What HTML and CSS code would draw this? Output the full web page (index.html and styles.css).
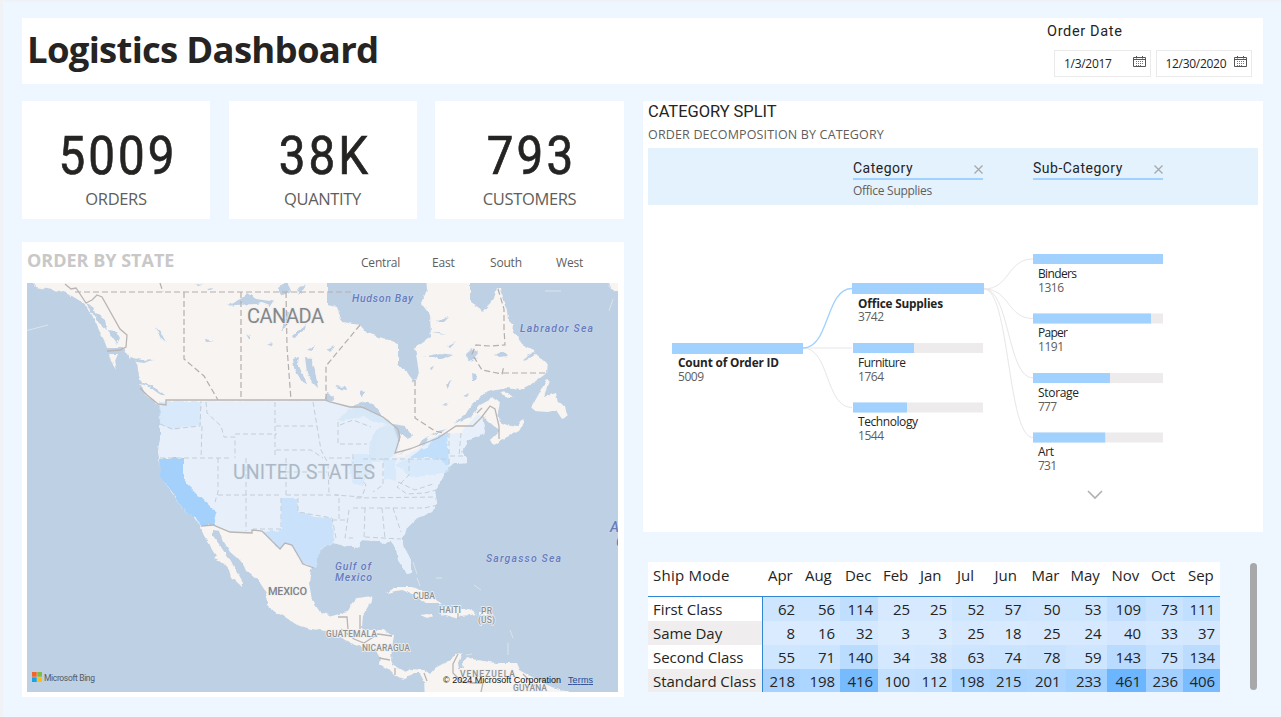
FILE: index.html
```
<!DOCTYPE html>
<html lang="en">
<head>
<meta charset="utf-8">
<title>Logistics Dashboard</title>
<link rel="stylesheet" href="styles.css">
</head>
<body>
<div class="page">
  <header class="header">
    <h1 class="title">Logistics Dashboard</h1>
    <div class="dates">
      <div class="dates-label">Order Date</div>
      <div class="dates-row">
        <div class="date"><span>1/3/2017</span>
          <svg class="cal" width="13" height="12" viewBox="0 0 13 12"><path d="M.5 1.5h12v9H.5zM.5 3.5h12M3.500 0v2.500M9.500 0v2.500"/><path class="dots" d="M3 5.500h8M3 7.500h8M3 9.500h6"/></svg></div>
        <div class="date"><span>12/30/2020</span>
          <svg class="cal" width="13" height="12" viewBox="0 0 13 12"><path d="M.5 1.5h12v9H.5zM.5 3.5h12M3.500 0v2.500M9.500 0v2.500"/><path class="dots" d="M3 5.500h8M3 7.500h8M3 9.500h6"/></svg></div>
      </div>
    </div>
  </header>
  <main class="main">
    <section class="left">
      <div class="kpis">
        <div class="kpi"><div class="kpi-value">5009</div><div class="kpi-label">ORDERS</div></div>
        <div class="kpi"><div class="kpi-value">38K</div><div class="kpi-label">QUANTITY</div></div>
        <div class="kpi"><div class="kpi-value">793</div><div class="kpi-label">CUSTOMERS</div></div>
      </div>
      <div class="map-card">
        <div class="map-head">
          <h2 class="map-title">ORDER BY STATE</h2>
          <nav class="regions"><span>Central</span><span>East</span><span>South</span><span>West</span></nav>
        </div>
        <svg class="map" width="591" height="409" viewBox="27 283 591 409">
          <filter id="coast" filterUnits="userSpaceOnUse" x="20" y="276" width="605" height="423"><feTurbulence type="fractalNoise" baseFrequency=".16" numOctaves="2" seed="4"/><feDisplacementMap in="SourceGraphic" scale="4" xChannelSelector="R" yChannelSelector="G"/></filter>
          <rect class="sea" x="27" y="283" width="591" height="409"/>
          <g filter="url(#coast)">
          <!-- Continent -->
          <path class="land" d="M31 276L36 287 46 289 60 291 72 296 80 301 86 306 92 315 98 328 104 340 107 348 124 348 129 358 137 363 139 376 142 383 150 385 158 390 165 395 165 402 159 403 161 412 160 424 160 440 158 452 160 460 162 470 163 480 168 487 173 494 180 504 185 512 192 515 197 520 200 525 206 540 211 548 216 556 213 559 223 563 229 570 231 577 238 583 242 587 243 583 236 571 231 561 225 553 219 544 213 536 213 530 220 531 224 542 230 552 237 558 244 566 246 571 250 573 258 580 266 592 267 605 275 612 285 617 297 625 311 629 320 630 332 632 345 641 355 645 366 648 376 651 380 658 379 664 388 669 396 677 405 679 414 673 420 673 424 680 425 699 575 699 567 692 547 685 533 677 520 670 517 663 497 663 477 660 467 657 462 664 463 668 459 668 458 662 462 653 458 652 450 660 435 668 430 674 423 670 410 669 405 672 393 665 391 660 392 648 394 635 383 630 363 630 362 627 363 615 370 603 372 596 357 598 352 603 347 612 333 616 320 612 312 600 309 583 311 570 317 553 320 550 333 543 343 545 358 548 360 541 380 542 385 544 390 540 396 548 398 560 407 574 411 573 411 560 403 545 403 537 407 528 417 518 432 512 437 503 435 492 443 477 447 469 454 464 467 463 467 458 462 452 467 440 485 433 483 424 482 415 487 420 495 427 500 430 490 440 493 445 507 437 519 431 525 421 523 419 517 427 507 425 500 422 498 412 500 403 493 398 480 405 470 417 453 424 464 416 473 403 487 392 507 388 520 390 533 383 547 373 548 363 537 355 534 350 522 344 519 337 513 333 514 325 508 319 507 311 503 300 500 289 497 288 493 300 482 312 478 307 470 303 470 276 426 276 427 290 421 303 430 315 431 337 415 348 419 373 413 382 407 373 398 363 398 343 367 333 360 325 342 322 337 307 327 305 327 276z"/>
          <path class="land" d="M139 384L148 386 158 393 165 397 165 405 156 404 147 395zM109 354L118 354 115 361 117 371 111 361zM547 379L550 382 544 397 556 393 558 402 565 406 567 415 562 419 556 410 548 412 534 411 531 408 541 390zM500 392L508 393 514 398 508 398zM386 593L396 587 412 587 426 593 442 604 427 604 417 596 402 590zM442 608L455 607 468 609 477 614 462 616 459 619 441 614zM420 615l8-1 5 2-6 2zM479 612h9v3h-9zM608 276h12v16l-9-3-2-5z"/>
          <!-- Lakes and fjords -->
          <path class="lake" d="M86 303q7 2 9 10l10 7 2 10-8-7-8-12zM108 330l8 1 4 7-3 6-6-8zM227 306l15-8 5-5 9 6 14 2-13 3-22 1zM262 303l12-3-4 6zM278 288l9-7 4 10-10 5zM298 288l9-5-8 12zM285 310l5 3-3 13-6 6 4-12zM292 336l14-12-2 7-11 7zM156 326l5 7 5 9-6-5zM205 339l9 2-8 1zM246 334l4 3v4zM267 345l6-3-2 5zM293 359l6-2-1 7 9 20-5-2-8-14zM305 357l6 1 4 13 3 17-6-6-5-9zM307 350l9-5-3 6zM327 350l7-4-4 6zM335 386l10 1 1 3-6-1zM361 389l4 3-2 5-4-2zM326 393l8 3-2 6-6-2zM435 322l14-5-6 6zM432 331l14 4-8-1zM447 346l9-5-6 6zM424 357l16-4 13 2-11 5-8-3zM430 368l5-2-3 5zM446 385l6-6-4 9zM442 405l5-2 1 3zM465 353l6-5 7 4-4 5 4 2-9 3zM471 373l5 1 1 6-5 1zM463 396l6-3-2 4zM494 355l8-3 6 4-8 1zM523 360l10-8 4 1-8 6zM130 357l12 3 12-1-10 4-13-2zM195 284l8 1-5 1zM207 289l6-1-3 3z"/>
          <path class="lake" d="M350 407L363 402 373 404 383 417 390 422 378 421 364 412 347 411 337 421zM369 442l10-15 5 1-7 9-2 20-6-1zM393 424l12 2 7 10-5 2-7-5 0 8-4 5zM395 457l15-9 16-4 3-8 13-4 4-3-10 3-14 8-3 5-17 7z"/>
          <!-- Shaded states -->
          <path class="us" d="M161 402L325 400 330 402 350 407 362 407 383 417 393 425 397 439 400 446 395 458 404 456 420 448 429 439 443 433 460 433 468 425 477 413 482 416 485 433 467 440 462 452 467 458 467 463 454 464 447 469 443 477 435 492 437 503 432 512 417 518 407 528 403 537 403 545 411 560 411 573 407 574 398 560 396 548 390 540 385 544 380 542 360 541 358 548 343 545 333 543 320 550 317 553 313 568 302 564 291 545 284 543 279 549 270 540 262 531 252 531 252 533 230 532 215 526 200 525 192 515 185 512 180 504 173 494 168 487 163 480 158 452 160 440 160 424z"/>
          <path class="s1" d="M159 401h42v24l-22 3-8 2-11-6zM354 454h16l2 16-9 16-9-2-5-16zM384 460l12-1v22l-12-3zM396 464l11-5h43l-1 13-38 6z"/>
          <path class="mich" d="M337 421l12-11 14-5 19 12 11 9-14-3-15-6zM369 456l1-15 9-14 14-3 5 14-4 17-8 6-14 1zM377 454l-2-9 7-15 7 4 3 12-4 12z"/>
          <path class="s2" d="M281 498h17v14l17 5 16 1 3 12-1 13-13 7-5 18-12-4-11-19-7-2-5 6-9-9-7-8 18-2z"/>
          <path class="ca" d="M160 458h24v23l33 32-3 12-14 0-3-7-12-6-12-19-12-15z"/>
          <path class="ny" d="M409 458l10-7 8-3 6-9 14-7 2 33-14-7z"/>
          </g>
          <path class="isles" d="M545 291h16M609 311l4-12M413 562l4 12M436 578h6M474 585l7 5M417 578l3 8M510 630l3 8M508 643v12M466 655l6-1M25 331l23-6"/>
          <!-- State and province boundaries -->
          <path class="st" d="M160 424l12 5 28-3 1-24M160 458h69M202 426l-1 32M206 402l1 11 14 13 3 11h11v21M218 458v34l-3 10M235 434h42M246 458v73M275 402v55M281 498v31M281 529h-28M218 495h64M286 458v37M276 426h41M276 450h35l12 8M313 402l8 48 7 13 1 31M286 472h41M286 495h53v25M298 498v14l34 6 4 20M338 422v22h29M329 458h24M340 425l13-5 18 7M353 454v15l13 16-4 12-27-2M363 459h20v26l-10 7M384 459h25v16l-12 12 10 7 18-1 11-3M356 498l80-1M353 508h71l14-3M349 510l-4 28h8M365 508l-1 30M382 508l3 31M393 508l8 24M332 520h15M398 482l17 8 18-6M409 459h40v16M449 433v23h19M461 433l-2 23M365 537l36 2"/>
          <path class="prov" d="M75 292h277M160 283l3 9M184 292v67l20 17 14 24M241 292v108M286 292l1 55 4 53M360 325l-34 41v34M415 380v38l20 13 8 2M498 289l6 20v20l1 16-15 1-14-1-4 9 10 16 20 4 2-8M503 373h43"/>
          <path class="intl" d="M65 284l6 5 5-1 10 15 6-3 5-5 5 2 18 32 7 6-1 12-6 3-13 1M140 388l7 7 11 9 8 1v-5h159l5 2 20 5 12 0 21 10 15 12 2 8-5 16 15-4 18-7 10-4 18-12h17l8-8 9-12 5 3 4 17 0 13M477 413l5-5M201 526l12-1 17 7 22 1 0-3 10 1 18 18 5-6 7 2 11 19 11 4M348 629l-1-12h-9M360 615v14M341 629l13 10 10 4 14-9 14 2M379 658l11 2M395 668v7M424 673l3 8M458 613v6M458 654l-5 10 0 9 9 9 16 1M470 683h13l-2 9M523 674l12 12"/>
          <!-- Labels -->
          <g class="country big"><text x="247" y="323" textLength="77">CANADA</text><text class="usname" x="233" y="479" textLength="142">UNITED STATES</text></g>
          <g class="country"><text class="mx" x="268" y="595" textLength="39">MEXICO</text><text x="413" y="599" textLength="22">CUBA</text><text x="439" y="613" textLength="22">HAITI</text><text x="481" y="614" textLength="11">PR</text><text x="478" y="623" textLength="17">(US)</text><text x="326" y="637" textLength="51">GUATEMALA</text><text x="362" y="651" textLength="48">NICARAGUA</text><text x="460" y="677" textLength="55">VENEZUELA</text><text x="513" y="691" textLength="34">GUYANA</text></g>
          <g class="water"><text x="352" y="302" textLength="61">Hudson Bay</text><text x="520" y="332" textLength="73">Labrador Sea</text><text x="335" y="570" textLength="36">Gulf of</text><text x="335" y="581" textLength="37">Mexico</text><text x="486" y="562" textLength="75">Sargasso Sea</text><text class="atl" x="610" y="532">A</text><text class="atl" x="616" y="547">O</text></g>
          <g><path fill="#f1652a" d="M32 672h4.700v4.700H32z"/><path fill="#80bc3f" d="M37.300 672H42v4.700h-4.700z"/><path fill="#16a5ea" d="M32 677.300h4.700v4.700H32z"/><path fill="#fdbc12" d="M37.300 677.300H42v4.700h-4.700z"/></g>
          <text class="bing" x="44" y="680.500" textLength="51">Microsoft Bing</text>
          <text class="copy" x="443" y="683" textLength="118">© 2024 Microsoft Corporation</text>
          <text class="copy terms" x="568" y="683" textLength="25">Terms</text>
        </svg>
      </div>
    </section>
    <section class="right">
      <div class="split">
        <h2 class="split-title">CATEGORY SPLIT</h2>
        <div class="split-sub">ORDER DECOMPOSITION BY CATEGORY</div>
        <div class="levels">
          <div class="level"><div class="level-head"><span>Category</span><svg width="9" height="9" viewBox="0 0 9 9"><path d="M.5.5l8 8M8.500.5l-8 8"/></svg></div><div class="level-value">Office Supplies</div></div>
          <div class="level"><div class="level-head"><span>Sub-Category</span><svg width="9" height="9" viewBox="0 0 9 9"><path d="M.5.5l8 8M8.500.5l-8 8"/></svg></div></div>
        </div>
        <svg class="tree" width="610" height="327" viewBox="648 205 610 327">
          <path class="link" d="M803 348H852M803 348C830 348 825 407.500 852 407.500M984 289C1010 289 1007 259 1033 259M984 289C1010 289 1007 318.500 1033 318.500M984 289C1010 289 1007 378 1033 378M984 289C1010 289 1007 437.500 1033 437.500"/>
          <path class="link on" d="M803 348C830 348 825 288.500 852 288.500"/>
          <g class="track"><path d="M853 343h130v10H853zM853 402.500h130v10H853zM1033 313.500h130v10h-130zM1033 373h130v10h-130zM1033 432.500h130v10h-130z"/></g>
          <g class="fill"><path d="M672 343h131v11H672zM852 283h132v11H852zM853 343h61v10h-61zM853 402.500h54v10h-54zM1033 254h130v10h-130zM1033 313.500h118v10h-118zM1033 373h77v10h-77zM1033 432.500h72.200v10H1033z"/></g>
          <g class="name"><text class="b" x="678" y="367" textLength="101">Count of Order ID</text><text class="b" x="858" y="308" textLength="85">Office Supplies</text><text x="858" y="367" textLength="48">Furniture</text><text x="858" y="426" textLength="60">Technology</text><text x="1038" y="278" textLength="39">Binders</text><text x="1038" y="337" textLength="30">Paper</text><text x="1038" y="397" textLength="41">Storage</text><text x="1038" y="456" textLength="16">Art</text></g>
          <g class="val"><text x="678" y="381" textLength="26">5009</text><text x="858" y="321" textLength="26">3742</text><text x="858" y="381" textLength="26">1764</text><text x="858" y="440" textLength="26">1544</text><text x="1038" y="292" textLength="26">1316</text><text x="1038" y="351" textLength="26">1191</text><text x="1038" y="411" textLength="19">777</text><text x="1038" y="470" textLength="19">731</text></g>
          <path class="more" d="M1088 491l7 7 7-7"/>
        </svg>
      </div>
      <div class="ship">
        <div class="grid">
          <div class="h">Ship Mode</div><div class="h">Apr</div><div class="h">Aug</div><div class="h">Dec</div><div class="h">Feb</div><div class="h">Jan</div><div class="h">Jul</div><div class="h">Jun</div><div class="h">Mar</div><div class="h">May</div><div class="h">Nov</div><div class="h">Oct</div><div class="h">Sep</div>
          <div class="m">First Class</div><div class="c" style="--v:62">62</div><div class="c" style="--v:56">56</div><div class="c" style="--v:114">114</div><div class="c" style="--v:25">25</div><div class="c" style="--v:25">25</div><div class="c" style="--v:52">52</div><div class="c" style="--v:57">57</div><div class="c" style="--v:50">50</div><div class="c" style="--v:53">53</div><div class="c" style="--v:109">109</div><div class="c" style="--v:73">73</div><div class="c" style="--v:111">111</div>
          <div class="m alt">Same Day</div><div class="c" style="--v:8">8</div><div class="c" style="--v:16">16</div><div class="c" style="--v:32">32</div><div class="c" style="--v:3">3</div><div class="c" style="--v:3">3</div><div class="c" style="--v:25">25</div><div class="c" style="--v:18">18</div><div class="c" style="--v:25">25</div><div class="c" style="--v:24">24</div><div class="c" style="--v:40">40</div><div class="c" style="--v:33">33</div><div class="c" style="--v:37">37</div>
          <div class="m">Second Class</div><div class="c" style="--v:55">55</div><div class="c" style="--v:71">71</div><div class="c" style="--v:140">140</div><div class="c" style="--v:34">34</div><div class="c" style="--v:38">38</div><div class="c" style="--v:63">63</div><div class="c" style="--v:74">74</div><div class="c" style="--v:78">78</div><div class="c" style="--v:59">59</div><div class="c" style="--v:143">143</div><div class="c" style="--v:75">75</div><div class="c" style="--v:134">134</div>
          <div class="m alt">Standard Class</div><div class="c" style="--v:218">218</div><div class="c" style="--v:198">198</div><div class="c" style="--v:416">416</div><div class="c" style="--v:100">100</div><div class="c" style="--v:112">112</div><div class="c" style="--v:198">198</div><div class="c" style="--v:215">215</div><div class="c" style="--v:201">201</div><div class="c" style="--v:233">233</div><div class="c" style="--v:461">461</div><div class="c" style="--v:236">236</div><div class="c" style="--v:406">406</div>
        </div>
        <div class="scroll"></div>
      </div>
    </section>
  </main>
</div>
</body>
</html>
```
FILE: styles.css
```
* { box-sizing: border-box; }
body { margin: 0; font-family: "Open Sans", "Noto Sans", sans-serif; color: #252423; }
h1, h2 { margin: 0; }
.page { width: 1281px; height: 717px; overflow: hidden; background: #eef7ff; border-left: 3px solid #f1f2f5; border-top: 2px solid #f1f2f5; padding: 16px 18px 0 19px; }
.header { height: 66px; background: #fff; display: flex; justify-content: space-between; padding: 0 11px 0 5px; }
.title { font-size: 36.500px; line-height: 63px; font-weight: 700; letter-spacing: -.72px; white-space: nowrap; }
.dates { width: 205px; padding-top: 5px; }
.dates-label { font: 14.500px/18px Roboto, sans-serif; letter-spacing: .65px; }
.dates-row { display: flex; gap: 5px; padding: 9px 0 0 7px; }
.date { width: 97px; height: 27px; border: 1px solid #eaeaea; display: flex; justify-content: space-between; padding: 0 4px 0 9px; font-size: 12px; line-height: 26px; letter-spacing: -.3px; white-space: nowrap; }
.cal { margin-top: 5px; fill: none; stroke: #555; stroke-width: 1; }
.dots { stroke-dasharray: 1 1; stroke: #777; }
.main { display: grid; grid-template-columns: 602px 620px; gap: 19px; padding-top: 17px; }
.left { display: flex; flex-direction: column; gap: 23px; }
.kpis { display: grid; grid-template-columns: 188px 188px 189px; justify-content: space-between; }
.kpi { height: 118px; background: #fff; text-align: center; padding-top: 23px; }
.kpi-value { font: 54px/64px Roboto, sans-serif; letter-spacing: 3.500px; margin-right: -4px; transform: scaleX(.88); -webkit-text-stroke: .7px #252423; }
.kpi-label { font-size: 16.500px; line-height: 22px; letter-spacing: -.35px; color: #605e5c; }
.map-card { height: 455px; background: #fff; padding: 0 5px; }
.map-head { height: 41px; display: flex; justify-content: space-between; }
.map-title { font-size: 18px; line-height: 37px; color: #c8c8c8; letter-spacing: 0; }
.regions { display: grid; grid-template-columns: 71px 58px 66px 63px; font-size: 12px; line-height: 41px; letter-spacing: -.2px; color: #605e5c; }
.map { display: block; }
.map text { font-family: Roboto, sans-serif; }
.sea, .lake { fill: #bed0e4; }
.land { fill: #f7f4f2; }
.isles { stroke: #dce3ea; fill: none; }
.us { fill: #e4f0fb; fill-opacity: .9; }
.s1 { fill: #d0e5fa; fill-opacity: .7; }
.mich { fill: #cfe2f5; fill-opacity: .6; }
.s2 { fill: #c9e1fa; }
.ca { fill: #a4d1fb; }
.ny { fill: #c1dffb; }
.st { fill: none; stroke: #c3ced9; stroke-dasharray: 5 3; }
.prov { fill: none; stroke: #b5aead; stroke-width: 1.200; stroke-dasharray: 6 3; }
.intl { fill: none; stroke: #b9b5b5; stroke-width: 1.300; }
.country { font-size: 8.500px; font-weight: 500; fill: #8e9093; stroke: #f0f0f0; stroke-width: 1.500px; paint-order: stroke; }
.country .mx { font-size: 11px; fill: #808285; }
.big { font-size: 20px; font-weight: 400; fill: #85888c; }
.big .usname { font-size: 19.500px; fill: #acb8c5; stroke: #e4edf6; }
.water { font-size: 10.500px; font-style: italic; font-weight: 500; fill: #667dbc; stroke: #ccd8ee; stroke-width: 1.200px; paint-order: stroke; }
.water .atl { font-size: 14px; }
.bing { font-size: 8.500px; fill: #555b63; }
.map .copy { font: 9px "Liberation Sans", sans-serif; fill: #111; }
.map .terms { fill: #274a91; text-decoration: underline; }
.right { display: flex; flex-direction: column; gap: 30px; }
.split { height: 431px; background: #fff; padding: 0 5px; }
.split-title { font: 16.500px/21px Roboto, sans-serif; letter-spacing: -.05px; }
.split-sub { font-size: 12.500px; line-height: 26px; letter-spacing: .16px; color: #605e5c; }
.levels { height: 57px; background: #e4f2fe; display: flex; gap: 50px; padding: 10px 0 0 205px; }
.level { width: 130px; }
.level-head { height: 22px; border-bottom: 2px solid #a0d1ff; display: flex; justify-content: space-between; align-items: center; font: 14px/20px Roboto, sans-serif; letter-spacing: .5px; }
.level-head svg { fill: none; stroke: #a6a9ac; stroke-width: 1.300; margin-top: 2px; }
.level-value { font-size: 12px; line-height: 22px; letter-spacing: -.28px; color: #605e5c; }
.tree { display: block; font-size: 12px; }
.link { fill: none; stroke: #e8e6e6; }
.on { stroke: #a0d1ff; stroke-width: 1.300; }
.track { fill: #edebeb; }
.fill { fill: #a0d1ff; }
.name { fill: #252423; }
.name .b { font-weight: 700; font-size: 11.800px; }
.val { fill: #605e5c; }
.more { fill: none; stroke: #b0b0b0; stroke-width: 1.600; }
.ship { display: flex; justify-content: space-between; padding: 0 6px 0 5px; }
.grid { display: grid; grid-template-columns: 115px 37px 40px 38px 37px 37px 37.500px 37px 39px 41px 39.500px 37px 37px; grid-template-rows: 35px 24px 24px 24px 23px; font-size: 15px; letter-spacing: -.05px; white-space: nowrap; }
.grid > div { line-height: 25px; padding: 0 5px; }
.grid > .h { line-height: 27px; background: #fff; border-bottom: 1px solid #3287d4; }
.grid > .h:first-child { letter-spacing: .25px; }
.grid > .m { background: #fff; border-right: 1px solid #3287d4; }
.grid > .alt { background: #efeded; }
.grid > .c { text-align: right; background: color-mix(in srgb, #6cb6ff calc(var(--v) * 100% / 461), #dcecff); }
.scroll { width: 7px; height: 127px; margin-top: 1px; border-radius: 4px; background: #a6a8aa; }
```
